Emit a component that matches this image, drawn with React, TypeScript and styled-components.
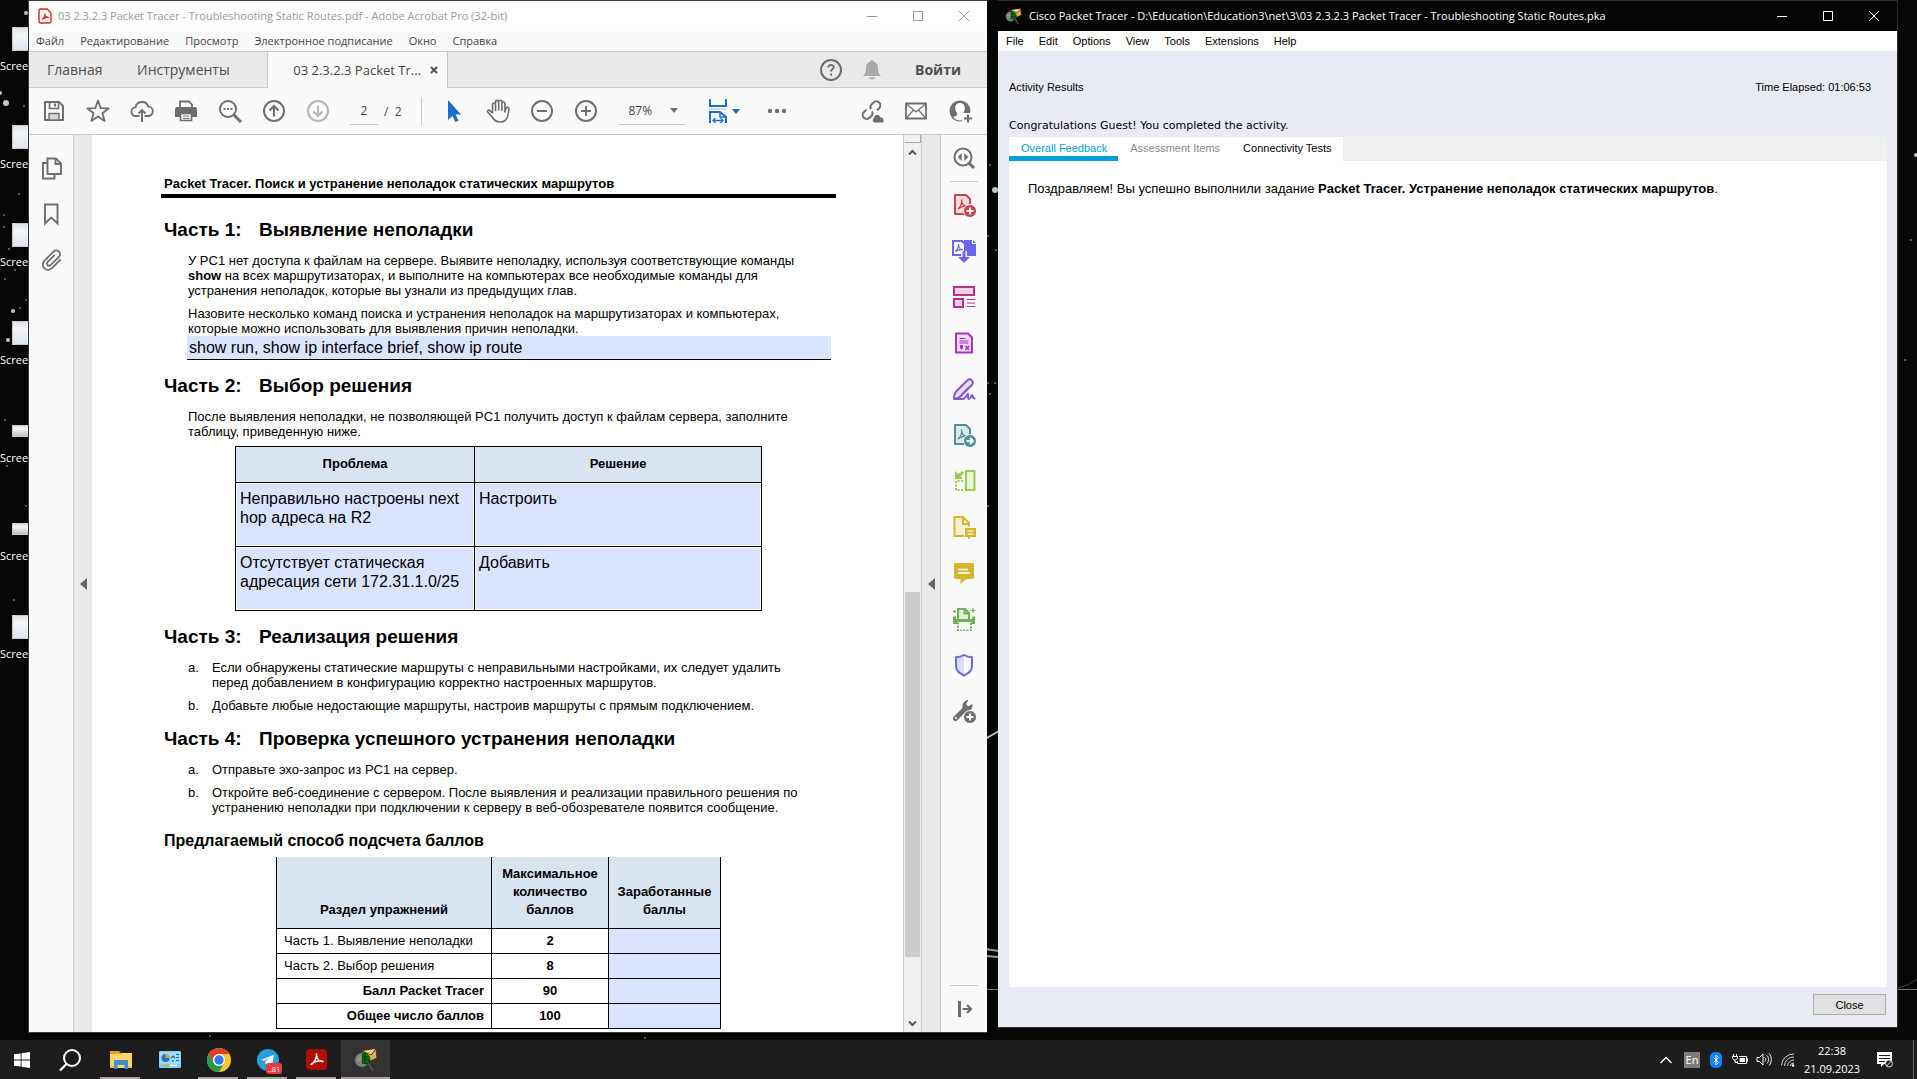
import React from "react";
import styled, { createGlobalStyle, css } from "styled-components";

const ui = `"Open Sans", "Noto Sans", sans-serif`;
const arial = `"Liberation Sans", Arial, sans-serif`;
const GREY = "#6e6e6e";

const GlobalStyle = createGlobalStyle`
  *, *::before, *::after { box-sizing: border-box; }
  body { margin: 0; background: #060606; overflow: hidden; }
  button, input, select, textarea { font: inherit; color: inherit; }
  button { border: 0; padding: 0; background: none; }
  h1, h2, h3, p, ol, ul { margin: 0; padding: 0; font-weight: normal; }
  svg { display: block; flex: none; }
`;

/* ---------- desktop ---------- */

const Screen = styled.div`
  display: grid;
  grid-template-rows: 1fr 39px;
  height: 100vh;
  font-family: ${ui};
  font-size: 11px;
`;

const Desktop = styled.div`
  position: relative;
  display: grid;
  grid-template-columns: 28px 959fr 11px 900fr 19px;
  min-height: 0;
  overflow: hidden;
  background: #060606;
`;

const Wallpaper = styled.svg`
  position: absolute;
  inset: 0;
  width: 100%;
  height: 100%;
`;

const Shortcuts = styled.ul`
  position: relative;
  list-style: none;
  padding-top: 20px;
`;

const Shortcut = styled.li`
  display: flex;
  flex-direction: column;
  height: 98px;
  color: #fff;
  line-height: 16px;
  white-space: nowrap;
`;

const ThumbSlot = styled.span`
  display: flex;
  align-items: center;
  height: 38px;
  padding-left: 12px;
`;

const Thumb = styled.span<{ $small?: boolean }>`
  flex: none;
  width: 32px;
  height: ${(p) => (p.$small ? 12 : 24)}px;
  background: linear-gradient(#dfe2e5, #f3f4f6 30%, ${(p) => (p.$small ? "#b8c4cc" : "#dde6f2")});
  border: 1px solid #c9c9c9;
`;

/* ---------- acrobat window ---------- */

const AcrobatWindow = styled.section`
  position: relative;
  grid-column: 2;
  display: flex;
  flex-direction: column;
  min-width: 0;
  min-height: 0;
  margin-bottom: 7px;
  border: 1px solid #3a3a3a;
  border-right: 0;
  background: #fafafa;
  color: #444;
`;

const TitleBar = styled.header<{ $dark?: boolean }>`
  display: flex;
  flex: none;
  align-items: center;
  gap: ${(p) => (p.$dark ? 7 : 6)}px;
  height: 30px;
  padding-left: ${(p) => (p.$dark ? 7 : 9)}px;
  background: ${(p) => (p.$dark ? "#050505" : "#fff")};
  color: ${(p) => (p.$dark ? "#fff" : "#999")};
  line-height: 16px;
  white-space: nowrap;
`;

const WindowTitle = styled.h1`
  flex: 1;
  min-width: 0;
  font-size: 11px;
`;

const CaptionGroup = styled.div`
  display: flex;
`;

const CaptionButton = styled.button`
  display: grid;
  place-items: center;
  width: 46px;
  height: 30px;
`;

const MenuBar = styled.nav<{ $tracer?: boolean }>`
  display: flex;
  flex: none;
  align-items: center;
  gap: ${(p) => (p.$tracer ? 15 : 16)}px;
  height: 20px;
  padding-left: ${(p) => (p.$tracer ? 8 : 7)}px;
  background: ${(p) => (p.$tracer ? "#fff" : "#fafafa")};
  color: ${(p) => (p.$tracer ? "#000" : "#444")};
  font-family: ${(p) => (p.$tracer ? arial : ui)};
`;

const MenuItem = styled.button`
  line-height: 16px;
  white-space: nowrap;
`;

const TabStrip = styled.div`
  display: flex;
  flex: none;
  height: 37px;
  background: #e9e9e9;
  border-top: 1px solid #c9c9c9;
  color: #505050;
  font-size: 14px;
`;

const AppTab = styled.button<{ $w: number }>`
  width: ${(p) => p.$w}px;
  padding-left: 18px;
  border-bottom: 1px solid #c9c9c9;
  line-height: 20px;
  text-align: left;
`;

const DocTab = styled.div`
  display: flex;
  align-items: center;
  justify-content: flex-end;
  gap: 9px;
  width: 181px;
  padding-right: 9px;
  background: #fafafa;
  border: solid #c9c9c9;
  border-width: 0 1px;
  color: #444;
  font-size: 13px;
  line-height: 20px;
  white-space: nowrap;
`;

const TabFiller = styled.div`
  display: flex;
  flex: 1;
  align-items: center;
  justify-content: flex-end;
  padding-right: 26px;
  border-bottom: 1px solid #c9c9c9;
`;

const SignIn = styled.button`
  margin-left: 22px;
  font-weight: 700;
  line-height: 20px;
`;

const Toolbar = styled.div`
  display: flex;
  flex: none;
  align-items: center;
  height: 47px;
  padding: 0 5px 0 3px;
  border-bottom: 1px solid #c9c9c9;
  font-size: 12px;
`;

const ToolButton = styled.button<{ $w?: number }>`
  display: grid;
  place-items: center;
  width: ${(p) => p.$w ?? 44}px;
  height: 44px;
`;

const PageInput = styled.input`
  width: 28px;
  height: 27px;
  margin: 0 6px 0 10px;
  padding: 0;
  border: 0;
  border-bottom: 1px solid #c9c9c9;
  background: none;
  text-align: center;
`;

const Divider = styled.span`
  width: 1px;
  height: 28px;
  margin: 0 10px 0 19px;
  background: #c9c9c9;
`;

const ZoomBox = styled.label`
  display: flex;
  align-items: center;
  width: 68px;
  height: 27px;
  margin: 0 18px 0 10px;
  padding: 0 8px 0 11px;
  border-bottom: 1px solid #c9c9c9;
`;

const ZoomSelect = styled.select`
  flex: 1;
  min-width: 0;
  padding: 0;
  border: 0;
  background: none;
  appearance: none;
`;

const Grow = styled.span`
  flex: 1;
`;

const DocArea = styled.div`
  display: flex;
  flex: 1;
  min-height: 0;
`;

const NavPane = styled.aside`
  display: flex;
  flex: none;
  flex-direction: column;
  width: 45px;
  padding: 10px 0 0 2px;
  border-right: 1px solid #c9c9c9;
`;

const NavButton = styled.button`
  display: grid;
  place-items: center;
  height: 46px;
`;

const Splitter = styled.button`
  display: grid;
  flex: none;
  place-items: center;
  width: 18px;
  background: #e9e9e9;
`;

const Page = styled.main`
  flex: 1;
  min-width: 0;
  overflow: hidden;
  padding: 41px 67px 0 69px;
  background: #fff;
  color: #000;
  font-family: ${arial};
  font-size: 13px;
  line-height: 15px;
  white-space: nowrap;
`;

const RunningHead = styled.p`
  padding: 0 0 2px 3px;
  border-bottom: 4px solid #000;
  font-weight: 700;
  line-height: 16px;
`;

const PartHeading = styled.h2<{ $first?: boolean }>`
  display: grid;
  grid-template-columns: 95px 1fr;
  margin-top: ${(p) => (p.$first ? 20 : 14)}px;
  padding-left: 3px;
  font-size: 19px;
  font-weight: 700;
  line-height: 24px;
`;

const Para = styled.p`
  margin-top: 11px;
  padding-left: 27px;
`;

const FieldLabel = styled.label`
  display: block;
  margin-top: 8px;
  padding-left: 27px;
`;

const fieldStyle = css`
  display: block;
  width: 100%;
  border: 0;
  border-radius: 0;
  outline: 0;
  background: #dbe4ff;
  color: #000;
  font-size: 16px;
`;

const LineField = styled.input`
  ${fieldStyle}
  width: calc(100% - 31px);
  height: 24px;
  margin-left: 26px;
  padding: 0 2px;
  border-bottom: 1px solid #000;
`;

const Steps = styled.ol`
  display: grid;
  gap: 8px;
  margin-top: 11px;
  padding-left: 27px;
  list-style: none;
`;

const Step = styled.li`
  display: grid;
  grid-template-columns: 24px 1fr;
`;

const SolutionTable = styled.table`
  width: 527px;
  height: 165px;
  margin: 7px 0 0 74px;
  border-collapse: collapse;
  table-layout: fixed;
  th, td { border: 1px solid #000; }
  th {
    height: 36px;
    padding: 0 0 2px;
    background: #d8e4f0;
    font-weight: 700;
  }
  td { height: 64px; padding: 1px; }
`;

const CellField = styled.textarea`
  ${fieldStyle}
  height: 61px;
  padding: 5px 3px;
  line-height: 19px;
  overflow: hidden;
  resize: none;
`;

const SubHeading = styled.h3`
  margin-top: 16px;
  padding-left: 3px;
  font-size: 16px;
  font-weight: 700;
  line-height: 20px;
`;

const ScoreTable = styled.table`
  width: 445px;
  margin: 6px 0 0 115px;
  border-collapse: collapse;
  table-layout: fixed;
  th, td { border: 1px solid #000; padding: 0; }
  thead th {
    height: 71px;
    padding-bottom: 9px;
    border-top: 0;
    background: #d8e4f0;
    line-height: 18px;
    vertical-align: bottom;
  }
  tbody th { padding: 0 7px; text-align: left; font-weight: 400; }
  tbody th[data-total="true"] { text-align: right; font-weight: 700; }
  tbody td { height: 25px; text-align: center; font-weight: 700; }
`;

const ScoreField = styled.input`
  ${fieldStyle}
  height: 24px;
  padding: 0;
`;

const ScrollBar = styled.div`
  display: flex;
  flex: none;
  flex-direction: column;
  align-items: center;
  width: 19px;
  background: #f0f0f0;
  border: solid #c9c9c9;
  border-width: 0 1px;
`;

const SplitBox = styled.span`
  width: 16px;
  height: 8px;
  border: solid #a8a8a8;
  border-width: 0 1px 1px 0;
`;

const ScrollArrow = styled.button`
  display: grid;
  place-items: center;
  width: 16px;
  height: 18px;
`;

const Track = styled.span<{ $part: number }>`
  flex: ${(p) => p.$part};
`;

const ScrollThumb = styled.span`
  flex: 365;
  width: 15px;
  background: #cdcdcd;
`;

const ToolsPane = styled.aside`
  display: flex;
  flex: none;
  flex-direction: column;
  align-items: center;
  width: 47px;
  border-left: 1px solid #c9c9c9;
`;

const PaneButton = styled.button`
  display: grid;
  place-items: center;
  width: 46px;
  height: 46px;
`;

const PaneRule = styled.span`
  width: 28px;
  height: 1px;
  background: #c9c9c9;
`;

/* ---------- packet tracer window ---------- */

const TracerWindow = styled.section`
  position: relative;
  grid-column: 4;
  display: flex;
  flex-direction: column;
  min-width: 0;
  min-height: 0;
  margin-bottom: 12px;
  border: 1px solid #2b2b2b;
  border-left: 0;
  background: #e8ebf3;
  color: #000;
`;

const TracerBody = styled.div`
  display: flex;
  flex: 1;
  flex-direction: column;
  padding: 28px 10px 12px 11px;
  font-family: ${arial};
  line-height: 16px;
`;

const ResultLine = styled.div`
  display: flex;
  justify-content: space-between;
  padding-right: 16px;
`;

const Congrats = styled.p`
  margin: 23px 0 3px;
  font-family: "DejaVu Sans", Verdana, sans-serif;
`;

const TracerTabs = styled.div`
  display: flex;
  height: 24px;
  background: #efefef;
`;

const TracerTab = styled.button<{ $active?: boolean; $muted?: boolean }>`
  padding: 3px 11px 0 12px;
  background: #fff;
  border-bottom: 5px solid ${(p) => (p.$active ? "#049fd9" : "#fff")};
  color: ${(p) => (p.$active ? "#049fd9" : p.$muted ? "#8a8a8a" : "#000")};
  line-height: 16px;
`;

const Feedback = styled.div`
  flex: 1;
  padding: 20px 19px;
  background: #fff;
  font-size: 13px;
`;

const CloseButton = styled.button`
  align-self: flex-end;
  width: 73px;
  height: 21px;
  margin: 7px 1px 0 0;
  border: 1px solid #adadad;
  background: #e1e1e1;
  line-height: 16px;
`;

/* ---------- taskbar ---------- */

const Taskbar = styled.footer`
  display: flex;
  align-items: stretch;
  background: #1d1d1d;
  color: #fff;
`;

const TaskButton = styled.button<{ $open?: boolean; $active?: boolean; $w?: number }>`
  position: relative;
  display: grid;
  place-items: center;
  width: ${(p) => p.$w ?? 49}px;
  background: ${(p) => (p.$active ? "#333" : "none")};
  &::after {
    content: "";
    position: absolute;
    bottom: 0;
    left: ${(p) => (p.$active ? 0 : 4)}px;
    right: ${(p) => (p.$active ? 0 : 5)}px;
    height: 2px;
    background: ${(p) => (p.$open || p.$active ? "#a9a3a6" : "transparent")};
  }
`;

const Badge = styled.span`
  position: absolute;
  left: 23px;
  top: 23px;
  width: 16px;
  height: 11px;
  border-radius: 3px;
  background: #ee3b38;
  font-size: 8px;
  line-height: 11px;
  text-align: center;
`;

const TrayButton = styled.button<{ $w: number }>`
  display: grid;
  place-items: center;
  width: ${(p) => p.$w}px;
`;

const Lang = styled.span`
  width: 16px;
  height: 16px;
  background: #7d7d7d;
  line-height: 16px;
  text-align: center;
`;

const Clock = styled.time`
  display: grid;
  align-content: center;
  width: 64px;
  line-height: 18px;
  text-align: center;
`;

const ShowDesktop = styled.button`
  width: 4px;
  margin-left: 8px;
  border-left: 1px solid #6a6a6a;
`;

/* ---------- drawings ---------- */

type IconProps = { children: React.ReactNode; size?: number; color?: string; sw?: number };

const Icon = ({ children, size = 24, color = GREY, sw = 2 }: IconProps) => (
  <svg width={size} height={size} viewBox={`0 0 ${size} ${size}`} fill="none" stroke={color} strokeWidth={sw} aria-hidden>
    {children}
  </svg>
);

const Minimize = () => (<Icon size={10} color="currentColor" sw={1}><path d="M0 5.500h10" /></Icon>);
const Maximize = () => (<Icon size={10} color="currentColor" sw={1}><path d="M.5.5h9v9h-9z" /></Icon>);
const CloseX = () => (<Icon size={10} color="currentColor" sw={1}><path d="M0 0l10 10M10 0L0 10" /></Icon>);

const Caption = () => (
  <CaptionGroup>
    <CaptionButton aria-label="Minimize"><Minimize /></CaptionButton>
    <CaptionButton aria-label="Maximize"><Maximize /></CaptionButton>
    <CaptionButton aria-label="Close window"><CloseX /></CaptionButton>
  </CaptionGroup>
);

const PdfGlyph = () => (
  <svg width="14" height="16" viewBox="0 0 14 16" fill="none" stroke="#e2231a" aria-hidden>
    <path d="M2.500 1h6.500l4 4v8.500a1.500 1.500 0 0 1-1.500 1.500h-9A1.500 1.500 0 0 1 1 13.500v-11A1.500 1.500 0 0 1 2.500 1z" strokeWidth="1.400" />
    <path d="M4 11.500c2-1 3-4 2.800-6 0 2.500 1.400 4 4 4-2-.3-4.700.3-6.800 2z" strokeWidth="1.200" />
  </svg>
);

const TracerGlyph = ({ size }: { size: number }) => (
  <svg width={size} height={size} viewBox="0 0 24 24" aria-hidden>
    <path d="M14 15l5 8" stroke="#555" strokeWidth="1.600" />
    <circle cx="8" cy="12" r="7" fill="#7d817c" />
    <path d="M3 11c2-4 6-4 8 0s-4 7-8 0z" fill="#8f938e" />
    <path d="M8 3l14-2 1 9-9 4z" fill="#e0b04f" stroke="#4a3813" />
    <path d="M8 3l9 4 5-6" fill="#f3cf7d" stroke="#4a3813" />
    <path d="M9 5c5 0 7 4 7 7l-3 4-5-1z" fill="#0b7a12" stroke="#033c06" />
    <path d="M9 9h6M9 12h6M11 6v9" stroke="#022c05" strokeWidth=".8" />
  </svg>
);

const SaveIcon = () => (
  <Icon>
    <path d="M3 3h14l4 4v14H3z" strokeLinejoin="round" />
    <path d="M7.500 3v6.500h9V3" strokeWidth="1.600" />
    <path d="M13 4.500v3" />
    <path d="M7 14.500h10V21H7z" fill="#d8d8d8" strokeWidth="1.400" />
  </Icon>
);
const StarIcon = () => (
  <Icon size={26} sw={1.8}><path d="M13 2.500l2.700 7.600 8 .2-6.300 4.900 2.200 7.700-6.600-4.500-6.600 4.500 2.200-7.700-6.300-4.900 8-.2z" strokeLinejoin="round" /></Icon>
);
const CloudIcon = () => (
  <Icon sw={1.9}>
    <path d="M9.500 17H6a4.300 4.300 0 0 1-.5-8.600 6.600 6.600 0 0 1 12.800-.8A4.700 4.700 0 0 1 18 17h-3.500" />
    <path d="M12 23V11.500M8.500 14.500l3.500-3.500 3.500 3.500" />
  </Icon>
);
const PrintIcon = () => (
  <Icon>
    <path d="M6 8V2.500h9l3 3V8" strokeWidth="1.800" />
    <path d="M3 8h18a2 2 0 0 1 2 2v8h-5v-4H6v4H1v-8a2 2 0 0 1 2-2z" fill={GREY} stroke="none" />
    <path d="M6.500 14.500h11v7h-11z" fill="#fafafa" strokeWidth="1.600" />
    <path d="M9 17h6M9 19.500h6" strokeWidth="1.200" />
  </Icon>
);
const FindIcon = () => (
  <Icon>
    <circle cx="10" cy="10" r="8" />
    <path d="M16 16l7 7" strokeWidth="3" />
    <path d="M5.500 10h2M9 10h2M12.500 10h2" strokeWidth="1.800" />
  </Icon>
);
const ArrowCircle = ({ down }: { down?: boolean }) => (
  <Icon color={down ? "#b5b5b5" : GREY}>
    <circle cx="12" cy="12" r="10" />
    <path d={down ? "M12 6.500v10.500M7.500 12.500l4.500 4.500 4.500-4.500" : "M12 17.500V7M7.500 11.500L12 7l4.500 4.500"} />
  </Icon>
);
const SignCircle = ({ plus }: { plus?: boolean }) => (
  <Icon><circle cx="12" cy="12" r="10" /><path d={plus ? "M7 12h10M12 7v10" : "M7 12h10"} /></Icon>
);
const CursorIcon = () => (
  <Icon><path d="M6 1v20l4.500-4 3 6 3-1.400-3-6H19z" fill="#1c6fc9" stroke="none" /></Icon>
);
const HandIcon = () => (
  <Icon sw={1.6}>
    <path d="M6.500 14V5.500a1.500 1.500 0 0 1 3 0V11.500V3a1.600 1.600 0 0 1 3.200 0V11V2.800a1.600 1.600 0 0 1 3.200 0V11.500V4.500a1.500 1.500 0 0 1 3 0V13l1-3.500a1.500 1.500 0 0 1 3 .5c-.3 3-.6 5-1.300 7.500-1 3.500-3.300 5.500-7.600 5.500-4 0-6-2-7.500-4.500L1.800 13c-.8-1.500 1.200-2.700 2.400-1.200z" strokeLinejoin="round" />
  </Icon>
);
const FitIcon = () => (
  <Icon color="#1c6fc9" size={26}>
    <path d="M5 1v7h16V1" />
    <path d="M4 11h18" stroke="#b9d6f2" strokeWidth="1.500" />
    <path d="M5 25V14h10l6 5v6" />
    <path d="M15 14v5h6" strokeWidth="1.500" />
    <path d="M8.500 22.500h9M10.500 20l-2.500 2.500 2.500 2.500M15.500 20l2.500 2.500-2.500 2.500" strokeWidth="1.300" />
  </Icon>
);
const Caret = ({ color = GREY }: { color?: string }) => (
  <svg width="8" height="5" viewBox="0 0 8 5" fill={color} aria-hidden><path d="M0 0h8L4 5z" /></svg>
);
const MoreIcon = () => (
  <Icon><g fill={GREY} stroke="none"><circle cx="5" cy="12" r="2.200" /><circle cx="12" cy="12" r="2.200" /><circle cx="19" cy="12" r="2.200" /></g></Icon>
);
const LinkIcon = () => (
  <Icon>
    <g transform="rotate(-45 11 11)">
      <path d="M10 7.500h-3.500a4 4 0 0 0 0 8h2.500a4 4 0 0 0 3.800-2.700" transform="translate(-2 0)" />
      <path d="M14 14.500h3a4 4 0 0 0 0-8h-2.500a4 4 0 0 0-3.800 2.700" transform="translate(1 1)" />
    </g>
    <path d="M14 24a3 3 0 0 1-.3-5.200c.6-4.300 5.800-4.300 6.800-.8 2.500 0 4 2 3.500 6z" fill={GREY} stroke="#fafafa" strokeWidth="1" />
  </Icon>
);
const MailIcon = () => (
  <Icon sw={1.8}><path d="M2 4.500h20v15H2z" /><path d="M2.500 5l9.500 8 9.500-8M2.500 19l7-8M21.500 19l-7-8" strokeWidth="1.300" /></Icon>
);
const PersonIcon = () => (
  <Icon>
    <circle cx="12" cy="12" r="10.500" fill={GREY} stroke="none" />
    <path d="M12 4c3.200 0 4.800 2.200 4.800 5s-1.300 4.500-2 5.500c0 2 1 2.500 4 3.500-2 2.500-4 3.500-6.800 3.500S7 20.500 5.200 18c3-1 4-1.500 4-3.500-.7-1-2-2.700-2-5.500S8.800 4 12 4z" fill="#fafafa" stroke="none" />
    <path d="M14 14h10v10H14z" fill="#fafafa" stroke="none" />
    <path d="M20 15.500v8M16 19.500h8" />
  </Icon>
);
const HelpIcon = () => (
  <Icon>
    <circle cx="12" cy="12" r="10" />
    <path d="M9.300 9.500c0-3.600 5.600-3.200 5.400-.2-.1 1.900-2.700 2-2.700 4.200M12 15.500v2" />
  </Icon>
);
const BellIcon = () => (
  <Icon><path d="M12 2c1 0 1.500.6 1.500 1.500C17 4.500 18 7 18 10c0 4 .8 6 3 8H3c2.200-2 3-4 3-8 0-3 1-5.500 4.500-6.500C10.500 2.600 11 2 12 2zM9 19.500h6c-.6 2.600-5.400 2.600-6 0z" fill="#a9a9a9" stroke="none" /></Icon>
);

const PagesIcon = () => (
  <Icon sw={1.9}><path d="M7.500 2.500h8.500l5 5V18H7.500z" /><path d="M15.500 2.500v5.500H21" /><path d="M7.500 7H3v15.500h11.500V18" /></Icon>
);
const BookmarkIcon = () => (<Icon sw={1.9}><path d="M5 2.500h12.500v19l-6.200-6L5 21.500z" /></Icon>);
const ClipIcon = () => (
  <Icon sw={1.8}><path d="M20.500 11.500l-8.800 8.800a5.200 5.200 0 0 1-7.400-7.400L13.600 3.600a3.700 3.700 0 0 1 5.300 5.300l-8.600 8.500a2.200 2.200 0 0 1-3-3l7.500-7.500" /></Icon>
);
const Triangle = () => (
  <svg width="7" height="12" viewBox="0 0 7 12" fill="#666" aria-hidden><path d="M7 0v12L0 6z" /></svg>
);

const ZoomPane = () => (
  <Icon>
    <circle cx="11" cy="11" r="8.500" />
    <path d="M17 17l5 5" strokeWidth="3" />
    <path d="M9.700 7v8l-4-4zM12.300 7v8l4-4z" fill={GREY} stroke="none" />
  </Icon>
);
const PdfSheet = ({ c, f }: { c: string; f: string }) => (
  <>
    <path d="M3 2h11l4 4v15H3z" fill={f} stroke={c} strokeLinejoin="round" />
    <path d="M6 16c2.500-2 4-6 3.500-9.500 0 4.500 1.500 6.500 6 7-3.500-1-6.500 0-9.500 2.500z" stroke={c} strokeWidth="1.200" />
  </>
);
const CreatePdf = () => (
  <Icon>
    <PdfSheet c="#c8434b" f="#f3dcdd" />
    <circle cx="18" cy="18" r="6.500" fill="#c8434b" stroke="#fafafa" strokeWidth="1" />
    <path d="M18 14.500v7M14.500 18h7" stroke="#fff" />
  </Icon>
);
const CombinePdf = () => (
  <Icon color="#6a67e8">
    <path d="M12 1h8v4h4v12H12z" fill="#6a67e8" stroke="none" />
    <path d="M21 1l3 3h-3z" fill="#6a67e8" stroke="none" />
    <path d="M1 2h9l3 3v11H1z" fill="#fafafa" />
    <path d="M3.500 12.500c2-2 3.200-4.500 3-7.500 0 4 1 5.500 4.500 5.700-3-.2-5.500.3-7.500 1.800z" strokeWidth="1.200" />
    <path d="M12 12v7" stroke="#fafafa" strokeWidth="6" />
    <path d="M12 12v8" strokeWidth="3" />
    <path d="M6 18h12l-6 6z" fill="#6a67e8" stroke="none" />
  </Icon>
);
const OrganizeIcon = () => (
  <Icon color="#b8308a"><path d="M2 2h20v8H2zM2 14h9v8H2z" fill="#eed3e5" /><path d="M15 14.500h8M15 18h8M15 21.500h8" strokeWidth="1.200" /></Icon>
);
const FormIcon = () => (
  <Icon color="#a733c9">
    <path d="M4 2.500h12l4 4v15H4z" fill="#efdcf5" strokeLinejoin="round" />
    <path d="M7.500 7.500h6M7.500 10h9M7.500 12h9" strokeWidth="1.200" />
    <path d="M8 14h3v3l-1.500 2L8 17z" fill="#a733c9" stroke="none" />
    <path d="M13.500 15l3.500 4M17 15l-3.500 4" strokeWidth="1.500" />
  </Icon>
);
const SignIcon = () => (
  <Icon color="#8259d2">
    <path d="M2 22c0-4 1-6.500 3-8.500L15.500 3.200c2.500-2.500 7 1 4.500 4.500L9 19c-2 2-4 3-7 3z" fill="#e6def5" strokeLinejoin="round" />
    <path d="M9 18l8-8" strokeWidth="1.200" />
    <path d="M2 22h9c3-1 4-5 5-5s-1 5 1 5 2-4 3-4 0 4 3.500 3.500" />
  </Icon>
);
const ExportPdf = () => (
  <Icon>
    <PdfSheet c="#4f9196" f="#dce9ea" />
    <circle cx="18" cy="18" r="6.500" fill="#4f9196" stroke="#fafafa" strokeWidth="1" />
    <path d="M14.500 18h6M18 15l3 3-3 3" stroke="#fff" strokeWidth="1.800" />
  </Icon>
);
const CompareIcon = () => (
  <Icon color="#9ccc4d">
    <path d="M14 2h8.500v19H14z" fill="#e9f4d8" />
    <path d="M11 12H4v9h8" strokeDasharray="2 1.500" />
    <path d="M3 2v8h8l-2.500-2.500L12 4l-1.500-2L6 5z" fill="#9ccc4d" stroke="none" />
  </Icon>
);
const SendComments = () => (
  <Icon color="#d4b72c">
    <path d="M2.500 2H11l6 6v13H2.500z" fill="#f4efd2" strokeLinejoin="round" />
    <path d="M11 2v7h6" />
    <path d="M12 11.500h12.500v12H12z" fill="#fafafa" stroke="none" />
    <path d="M13 13h11v9h-5l-3 3v-3h-3z" fill="#d4b72c" stroke="none" />
    <path d="M15.500 16h6M15.500 19h6" stroke="#fff" strokeWidth="1.200" />
  </Icon>
);
const CommentIcon = () => (
  <Icon><path d="M3.500 2h17A1.500 1.500 0 0 1 22 3.500v13a1.500 1.500 0 0 1-1.500 1.500H14l-5.500 5V18h-5A1.500 1.500 0 0 1 2 16.500v-13A1.500 1.500 0 0 1 3.500 2z" fill="#d4b72c" stroke="none" /><path d="M6 8.500h10M6 12h12" stroke="#fff" strokeWidth="1.500" /></Icon>
);
const ScanIcon = () => (
  <Icon color="#6eb15b">
    <path d="M6 12V2h7l4 4v6" fill="#deeed9" />
    <path d="M12.500 2v4.500H17" />
    <path d="M1 9.500h3V12h16V9.500h3V17H1z" fill="#6eb15b" stroke="none" />
    <path d="M5 15h14v2H5z" fill="#fafafa" stroke="none" />
    <path d="M6 15.500v8h13v-8" strokeDasharray="2 1.300" />
    <path d="M21 1v5M18.500 3.500h5M2.500 3v3M1 4.500h3" strokeWidth="1.200" />
  </Icon>
);
const ShieldIcon = () => (
  <Icon color="#6a67e8"><path d="M12 2C9.500 3.500 7 4.200 4 4.300v9c0 4.200 3.500 7.200 8 9.200z" fill="#dcdcf6" stroke="none" /><path d="M12 2c2.500 1.500 5 2.200 8 2.300v9c0 4.200-3.500 7.200-8 9.200-4.500-2-8-5-8-9.200v-9C7 4.200 9.500 3.500 12 2z" /></Icon>
);
const WrenchIcon = () => (
  <Icon>
    <path d="M3.500 19.500L13 10" strokeWidth="5" strokeLinecap="round" />
    <path d="M10.500 10.500V6C11.500 2.500 13.500 1 16.500 1L14 5l2 2.500L20.500 5c.5 4-1.500 7-5.500 7z" fill={GREY} stroke="none" />
    <circle cx="4" cy="19" r="1" fill="#fafafa" stroke="none" />
    <circle cx="18" cy="18" r="6.500" fill={GREY} stroke="#fafafa" strokeWidth="1" />
    <path d="M18 14.500v7M14.500 18h7" stroke="#fff" />
  </Icon>
);
const CollapseIcon = () => (
  <Icon><path d="M7.500 4v16" strokeWidth="3" /><path d="M10.500 12h8.500M15 8l4 4-4 4" strokeWidth="2.200" /></Icon>
);
const Chevron = ({ down }: { down?: boolean }) => (
  <Icon size={9} sw={2} color="#555"><path d={down ? "M1 2.500l3.500 3.500L8 2.500" : "M1 6.500L4.500 3 8 6.500"} /></Icon>
);

/* taskbar glyphs */
const WindowsLogo = () => (
  <Icon size={16}><path d="M0 2.300l6.700-.9v6.200H0zM7.500 1.300L16 0v7.600H7.500zM0 8.400h6.700v6.200L0 13.700zM7.500 8.400H16V16l-8.500-1.200z" fill="#fff" stroke="none" /></Icon>
);
const SearchGlyph = () => (<Icon size={22} color="#fff"><circle cx="13" cy="9" r="8" /><path d="M7.500 15L1 21.500" strokeWidth="2.300" /></Icon>);
const ExplorerIcon = () => (
  <svg width="22" height="20" viewBox="0 0 22 20" aria-hidden>
    <path d="M0 1h9l2 2h-1v4H0z" fill="#e2a023" /><path d="M0 4h10l1-1h11v15H0z" fill="#fbd469" />
    <path d="M4 19v-8a1 1 0 0 1 1-1h12a1 1 0 0 1 1 1v8h-3.500v-4h-7v4z" fill="#3a8fd8" /><path d="M0 16h4v2H0zM18 16h4v2h-4z" fill="#f0bf4a" />
  </svg>
);
const PanelIcon = () => (
  <svg width="22" height="17" viewBox="0 0 22 17" aria-hidden>
    <rect width="22" height="17" rx="1" fill="#7fcdf5" /><rect x="1" y="1" width="20" height="12" fill="#9bdcfa" />
    <circle cx="6.500" cy="7" r="4" fill="#1c78c0" /><path d="M6.500 7V3a4 4 0 0 1 4 4z" fill="#f4a12c" />
    <path d="M12 7l2-2 2 2M17 3.500h3M17 6.500h3M17 9.500h3M13 10h2" stroke="#15659f" strokeWidth="1.200" fill="none" />
    <path d="M3 14.500h7" stroke="#f4a12c" strokeWidth="1.500" /><path d="M11 14.500h7" stroke="#fff" strokeWidth="1.500" />
  </svg>
);
const ChromeIcon = () => (
  <svg width="24" height="24" viewBox="0 0 24 24" aria-hidden>
    <circle cx="12" cy="12" r="12" fill="#fcc624" />
    <path d="M1.600 6A12 12 0 0 1 22.400 6H12a6 6 0 0 0-5.200 9z" fill="#e33b2e" />
    <path d="M1.600 6A12 12 0 0 0 12 24l5.200-9A6 6 0 0 1 6.800 15z" fill="#219a4b" />
    <circle cx="12" cy="12" r="6" fill="#fff" /><circle cx="12" cy="12" r="4.700" fill="#3079ee" />
  </svg>
);
const TelegramIcon = () => (
  <svg width="22" height="22" viewBox="0 0 22 22" aria-hidden>
    <circle cx="11" cy="11" r="11" fill="#2a9fdb" /><path d="M4 11l13-5.300-2.300 11-3.900-2.900-2 1.900-.5-3.500 5.300-4.700-6.500 4.200z" fill="#fff" />
  </svg>
);
const AcrobatIcon = () => (
  <svg width="21" height="21" viewBox="0 0 21 21" aria-hidden>
    <rect width="21" height="21" rx="4" fill="#b30b00" />
    <path d="M5 15.500c3-1 6-7 5.500-10.500 0 4.500 2.500 8 6.500 7.500-3-1.500-8-.5-12 3z" stroke="#fff" strokeWidth="1.500" fill="none" strokeLinejoin="round" />
  </svg>
);
const TrayChevron = () => (<Icon size={12} color="#fff" sw={1.3}><path d="M.5 9L6 3.500 11.500 9" /></Icon>);
const Bluetooth = () => (
  <svg width="12" height="16" viewBox="0 0 12 16" aria-hidden><rect width="12" height="16" rx="5" fill="#0a84ff" /><path d="M3.500 5.500l5 5L6 13V3l2.500 2.500-5 5" stroke="#fff" fill="none" /></svg>
);
const Battery = () => (
  <Icon size={16} color="#fff" sw={1}>
    <path d="M7 4.500h7.500v7H5.500V9M14.500 6.500h1v3h-1" /><path d="M8 6.500h4.500v3H8z" fill="#fff" />
    <path d="M1.500 2v2M4.500 2v2M.5 4.500h5v2l-2.500 2-2.500-2zM3 8v2.500h2" />
  </Icon>
);
const Speaker = () => (
  <Icon size={17} color="#fff" sw={1}><path d="M1 6.500h2.500L7 3v11l-3.500-3.500H1zM9 6.500c1 1 1 3 0 4M11 4.500c2 2 2 6 0 8M13 2.500c3 3 3 9 0 12" /></Icon>
);
const Wifi = () => (
  <Icon size={14} color="#d5d5d5" sw={1}>
    <path d="M.5 12.500A12 12 0 0 1 13 1M3.500 13A9 9 0 0 1 13 4M6.500 13A6.500 6.500 0 0 1 13 7M9 13a4 4 0 0 1 4-3" /><circle cx="12" cy="12.500" r="1.300" fill="#fff" stroke="none" />
  </Icon>
);
const Notification = () => (
  <Icon size={17} color="#1d1d1d" sw={1}>
    <path d="M1 1h15v12H8l-3 3v-3H1z" fill="#fff" stroke="none" /><path d="M3 4.500h11M3 7.500h11M3 10.500h6" />
    <circle cx="13" cy="12.500" r="3.500" fill="#1d1d1d" stroke="#ddd" /><path d="M10.500 15l5-5" stroke="#ddd" />
  </Icon>
);

const stars: [number, number, number][] = [
  [26, 13, 2], [0, 93, 2], [6, 103, 3], [24, 106, 1], [4, 215, 1], [19, 194, 1], [4, 227, 1], [9, 249, 1], [5, 279, 1],
  [15, 270, 1], [26, 300, 1], [13, 311, 2], [8, 340, 2], [20, 308, 1], [7, 466, 1], [26, 506, 1], [5, 420, 1],
  [14, 600, 1], [210, 1036, 1], [645, 1038, 1], [990, 165, 1], [995, 190, 3], [996, 250, 1], [988, 236, 1],
  [988, 383, 1], [995, 383, 1], [990, 394, 1], [1916, 155, 2], [988, 506, 1], [1905, 360, 1], [1911, 240, 1],
];

const Sky = () => (
  <Wallpaper aria-hidden>
    {stars.map(([x, y, r]) => (
      <circle key={`${x}-${y}`} cx={x} cy={y} r={r} fill="#d8d8d8" opacity={r > 1 ? 0.9 : 0.5} />
    ))}
    <path d="M985 739l14-8" stroke="#bdbdbd" strokeWidth="2" />
    <path d="M985 949l14 2M985 956l14 1" stroke="#9a9a9a" strokeWidth="2" />
    <path d="M985 989.500h14M1898 989.500h19" stroke="#777" />
    <path d="M1898 988q10-2 19-9" stroke="#3a3a3a" fill="none" />
  </Wallpaper>
);

/* ---------- content ---------- */

const acrobatMenu = ["Файл", "Редактирование", "Просмотр", "Электронное подписание", "Окно", "Справка"];
const tracerMenu = ["File", "Edit", "Options", "View", "Tools", "Extensions", "Help"];

const tools: [string, React.FC][] = [
  ["Создать PDF", CreatePdf], ["Объединить файлы", CombinePdf], ["Систематизировать страницы", OrganizeIcon],
  ["Подготовить форму", FormIcon], ["Заполнить и подписать", SignIcon], ["Экспорт PDF", ExportPdf],
  ["Сравнить файлы", CompareIcon], ["Отправить на комментирование", SendComments], ["Комментарий", CommentIcon],
  ["Сканирование", ScanIcon], ["Защитить", ShieldIcon], ["Другие инструменты", WrenchIcon],
];

const solutions = [
  ["Неправильно настроены next\nhop адреса на R2", "Настроить"],
  ["Отсутствует статическая\nадресация сети 172.31.1.0/25", "Добавить"],
];

const scores: [string, string, boolean][] = [
  ["Часть 1. Выявление неполадки", "2", false],
  ["Часть 2. Выбор решения", "8", false],
  ["Балл Packet Tracer", "90", true],
  ["Общее число баллов", "100", true],
];

const Part = ({ n, title }: { n: number; title: string }) => (
  <PartHeading $first={n === 1}>
    <span>Часть {n}:</span>
    <span>{title}</span>
  </PartHeading>
);

const WorksheetPage = () => (
  <Page>
    <RunningHead>Packet Tracer. Поиск и устранение неполадок статических маршрутов</RunningHead>

    <Part n={1} title="Выявление неполадки" />
    <Para>
      У PC1 нет доступа к файлам на сервере. Выявите неполадку, используя соответствующие команды
      <br />
      <b>show</b> на всех маршрутизаторах, и выполните на компьютерах все необходимые команды для
      <br />
      устранения неполадок, которые вы узнали из предыдущих глав.
    </Para>
    <FieldLabel htmlFor="commands">
      Назовите несколько команд поиска и устранения неполадок на маршрутизаторах и компьютерах,
      <br />
      которые можно использовать для выявления причин неполадки.
    </FieldLabel>
    <LineField id="commands" defaultValue="show run, show ip interface brief, show ip route" />

    <Part n={2} title="Выбор решения" />
    <Para>
      После выявления неполадки, не позволяющей PC1 получить доступ к файлам сервера, заполните
      <br />
      таблицу, приведенную ниже.
    </Para>
    <SolutionTable>
      <colgroup>
        <col width="239" />
        <col />
      </colgroup>
      <thead>
        <tr>
          <th scope="col">Проблема</th>
          <th scope="col">Решение</th>
        </tr>
      </thead>
      <tbody>
        {solutions.map(([problem, fix], i) => (
          <tr key={fix}>
            <td><CellField aria-label={`Проблема ${i + 1}`} defaultValue={problem} /></td>
            <td><CellField aria-label={`Решение ${i + 1}`} defaultValue={fix} /></td>
          </tr>
        ))}
      </tbody>
    </SolutionTable>

    <Part n={3} title="Реализация решения" />
    <Steps>
      <Step>
        <span>a.</span>
        <span>
          Если обнаружены статические маршруты с неправильными настройками, их следует удалить
          <br />
          перед добавлением в конфигурацию корректно настроенных маршрутов.
        </span>
      </Step>
      <Step>
        <span>b.</span>
        <span>Добавьте любые недостающие маршруты, настроив маршруты с прямым подключением.</span>
      </Step>
    </Steps>

    <Part n={4} title="Проверка успешного устранения неполадки" />
    <Steps>
      <Step>
        <span>a.</span>
        <span>Отправьте эхо-запрос из PC1 на сервер.</span>
      </Step>
      <Step>
        <span>b.</span>
        <span>
          Откройте веб-соединение с сервером. После выявления и реализации правильного решения по
          <br />
          устранению неполадки при подключении к серверу в веб-обозревателе появится сообщение.
        </span>
      </Step>
    </Steps>

    <SubHeading>Предлагаемый способ подсчета баллов</SubHeading>
    <ScoreTable>
      <colgroup>
        <col width="215" />
        <col width="117" />
        <col />
      </colgroup>
      <thead>
        <tr>
          <th scope="col">Раздел упражнений</th>
          <th scope="col">Максимальное<br />количество<br />баллов</th>
          <th scope="col">Заработанные<br />баллы</th>
        </tr>
      </thead>
      <tbody>
        {scores.map(([name, max, total]) => (
          <tr key={name}>
            <th scope="row" data-total={total}>{name}</th>
            <td>{max}</td>
            <td><ScoreField aria-label={`${name}: заработанные баллы`} /></td>
          </tr>
        ))}
      </tbody>
    </ScoreTable>
  </Page>
);

const Acrobat = () => (
  <AcrobatWindow>
    <TitleBar>
      <PdfGlyph />
      <WindowTitle>03 2.3.2.3 Packet Tracer - Troubleshooting Static Routes.pdf - Adobe Acrobat Pro (32-bit)</WindowTitle>
      <Caption />
    </TitleBar>
    <MenuBar>
      {acrobatMenu.map((m) => <MenuItem key={m}>{m}</MenuItem>)}
    </MenuBar>
    <TabStrip>
      <AppTab $w={90}>Главная</AppTab>
      <AppTab $w={148}>Инструменты</AppTab>
      <DocTab>
        03 2.3.2.3 Packet Tr...
        <button aria-label="Закрыть вкладку"><Icon size={8} color="#555"><path d="M1 1l6 6M7 1L1 7" /></Icon></button>
      </DocTab>
      <TabFiller>
        <ToolButton aria-label="Справка" $w={40}><HelpIcon /></ToolButton>
        <ToolButton aria-label="Уведомления" $w={42}><BellIcon /></ToolButton>
        <SignIn>Войти</SignIn>
      </TabFiller>
    </TabStrip>
    <Toolbar>
      <ToolButton aria-label="Сохранить"><SaveIcon /></ToolButton>
      <ToolButton aria-label="Избранное"><StarIcon /></ToolButton>
      <ToolButton aria-label="Облако"><CloudIcon /></ToolButton>
      <ToolButton aria-label="Печать"><PrintIcon /></ToolButton>
      <ToolButton aria-label="Найти"><FindIcon /></ToolButton>
      <ToolButton aria-label="Предыдущая страница"><ArrowCircle /></ToolButton>
      <ToolButton aria-label="Следующая страница"><ArrowCircle down /></ToolButton>
      <PageInput aria-label="Номер страницы" defaultValue="2" />
      <span>/&nbsp; 2</span>
      <Divider />
      <ToolButton aria-label="Выделение"><CursorIcon /></ToolButton>
      <ToolButton aria-label="Рука"><HandIcon /></ToolButton>
      <ToolButton aria-label="Уменьшить"><SignCircle /></ToolButton>
      <ToolButton aria-label="Увеличить"><SignCircle plus /></ToolButton>
      <ZoomBox>
        <ZoomSelect aria-label="Масштаб" defaultValue="87%">
          <option>87%</option>
        </ZoomSelect>
        <Caret />
      </ZoomBox>
      <ToolButton aria-label="По ширине" $w={28}><FitIcon /></ToolButton>
      <Caret color="#1c6fc9" />
      <ToolButton aria-label="Еще" $w={74}><MoreIcon /></ToolButton>
      <Grow />
      <ToolButton aria-label="Ссылка"><LinkIcon /></ToolButton>
      <ToolButton aria-label="Отправить"><MailIcon /></ToolButton>
      <ToolButton aria-label="Пригласить"><PersonIcon /></ToolButton>
    </Toolbar>
    <DocArea>
      <NavPane>
        <NavButton aria-label="Страницы"><PagesIcon /></NavButton>
        <NavButton aria-label="Закладки"><BookmarkIcon /></NavButton>
        <NavButton aria-label="Вложения"><ClipIcon /></NavButton>
      </NavPane>
      <Splitter aria-label="Панель навигации"><Triangle /></Splitter>
      <WorksheetPage />
      <ScrollBar>
        <SplitBox />
        <ScrollArrow aria-label="Вверх"><Chevron /></ScrollArrow>
        <Track $part={431} />
        <ScrollThumb />
        <Track $part={57} />
        <ScrollArrow aria-label="Вниз"><Chevron down /></ScrollArrow>
      </ScrollBar>
      <Splitter aria-label="Панель инструментов"><Triangle /></Splitter>
      <ToolsPane>
        <PaneButton aria-label="Поиск инструментов"><ZoomPane /></PaneButton>
        <PaneRule />
        {tools.map(([label, Glyph]) => (
          <PaneButton key={label} aria-label={label}><Glyph /></PaneButton>
        ))}
        <Grow />
        <PaneRule />
        <PaneButton aria-label="Свернуть"><CollapseIcon /></PaneButton>
      </ToolsPane>
    </DocArea>
  </AcrobatWindow>
);

const PacketTracer = () => (
  <TracerWindow>
    <TitleBar $dark>
      <TracerGlyph size={17} />
      <WindowTitle>Cisco Packet Tracer - D:\Education\Education3\net\3\03 2.3.2.3 Packet Tracer - Troubleshooting Static Routes.pka</WindowTitle>
      <Caption />
    </TitleBar>
    <MenuBar $tracer>
      {tracerMenu.map((m) => <MenuItem key={m}>{m}</MenuItem>)}
    </MenuBar>
    <TracerBody>
      <ResultLine>
        <span>Activity Results</span>
        <span>Time Elapsed: 01:06:53</span>
      </ResultLine>
      <Congrats>Congratulations Guest! You completed the activity.</Congrats>
      <TracerTabs>
        <TracerTab $active>Overall Feedback</TracerTab>
        <TracerTab $muted>Assessment Items</TracerTab>
        <TracerTab>Connectivity Tests</TracerTab>
      </TracerTabs>
      <Feedback>
        Поздравляем! Вы успешно выполнили задание <b>Packet Tracer. Устранение неполадок статических маршрутов</b>.
      </Feedback>
      <CloseButton>Close</CloseButton>
    </TracerBody>
  </TracerWindow>
);

const Tasks = () => (
  <Taskbar>
    <TaskButton $w={44} aria-label="Пуск"><WindowsLogo /></TaskButton>
    <TaskButton $w={52} aria-label="Поиск"><SearchGlyph /></TaskButton>
    <TaskButton $open aria-label="Проводник"><ExplorerIcon /></TaskButton>
    <TaskButton aria-label="Панель управления"><PanelIcon /></TaskButton>
    <TaskButton $open aria-label="Chrome"><ChromeIcon /></TaskButton>
    <TaskButton $open aria-label="Telegram"><TelegramIcon /><Badge>..81</Badge></TaskButton>
    <TaskButton $open aria-label="Acrobat"><AcrobatIcon /></TaskButton>
    <TaskButton $active aria-label="Packet Tracer"><TracerGlyph size={24} /></TaskButton>
    <Grow />
    <TrayButton $w={28} aria-label="Скрытые значки"><TrayChevron /></TrayButton>
    <TrayButton $w={24} aria-label="Язык"><Lang>En</Lang></TrayButton>
    <TrayButton $w={24} aria-label="Bluetooth"><Bluetooth /></TrayButton>
    <TrayButton $w={24} aria-label="Батарея"><Battery /></TrayButton>
    <TrayButton $w={24} aria-label="Громкость"><Speaker /></TrayButton>
    <TrayButton $w={24} aria-label="Сеть"><Wifi /></TrayButton>
    <Clock>
      <span>22:38</span>
      <span>21.09.2023</span>
    </Clock>
    <TrayButton $w={41} aria-label="Уведомления"><Notification /></TrayButton>
    <ShowDesktop aria-label="Свернуть все окна" />
  </Taskbar>
);

export default function App() {
  return (
    <Screen>
      <GlobalStyle />
      <Desktop>
        <Sky />
        <Shortcuts>
          {[false, false, false, false, true, true, false].map((small, i) => (
            <Shortcut key={i}>
              <ThumbSlot><Thumb $small={small} /></ThumbSlot>
              Scree
            </Shortcut>
          ))}
        </Shortcuts>
        <Acrobat />
        <PacketTracer />
      </Desktop>
      <Tasks />
    </Screen>
  );
}
